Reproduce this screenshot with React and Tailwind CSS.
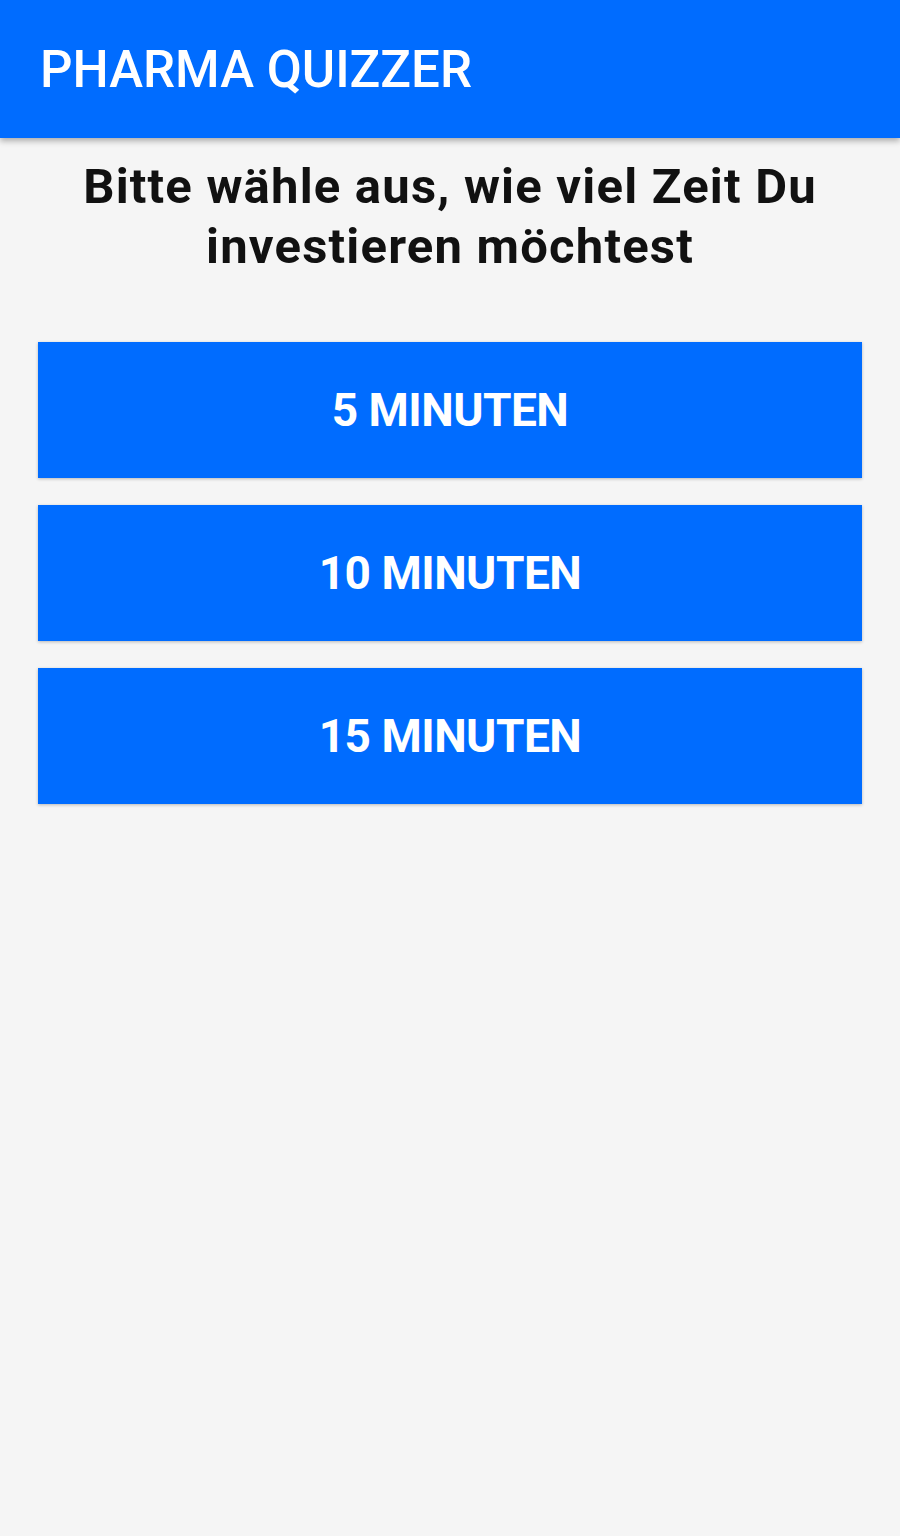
import React from 'react';

const durations = ['5 MINUTEN', '10 MINUTEN', '15 MINUTEN'];

const App = () => {
  return (
    <div className="bg-[#f5f5f5] min-h-[1536px] font-['Roboto',sans-serif]">
      <header className="bg-[#006cff] h-[138px] flex items-center px-[40px] shadow-[0_3px_6px_rgba(0,0,0,0.3)]">
        <h1 className="text-white text-[51px] font-medium leading-none">PHARMA QUIZZER</h1>
      </header>

      <main className="px-[38px]">
        <p className="text-center text-[#111] text-[49px] font-bold tracking-[1.2px] leading-[60px] pt-[19px] px-[10px]">
          Bitte wähle aus, wie viel Zeit Du investieren möchtest
        </p>

        <div className="flex flex-col gap-[27px] mt-[65px]">
          {durations.map(label => (
            <button
              key={label}
              className="w-full h-[136px] bg-[#006cff] text-white text-[46px] font-bold tracking-[-0.5px] shadow-[0_1px_3px_rgba(0,0,0,0.25)]"
            >
              {label}
            </button>
          ))}
        </div>
      </main>
    </div>
  );
};

export default App;
